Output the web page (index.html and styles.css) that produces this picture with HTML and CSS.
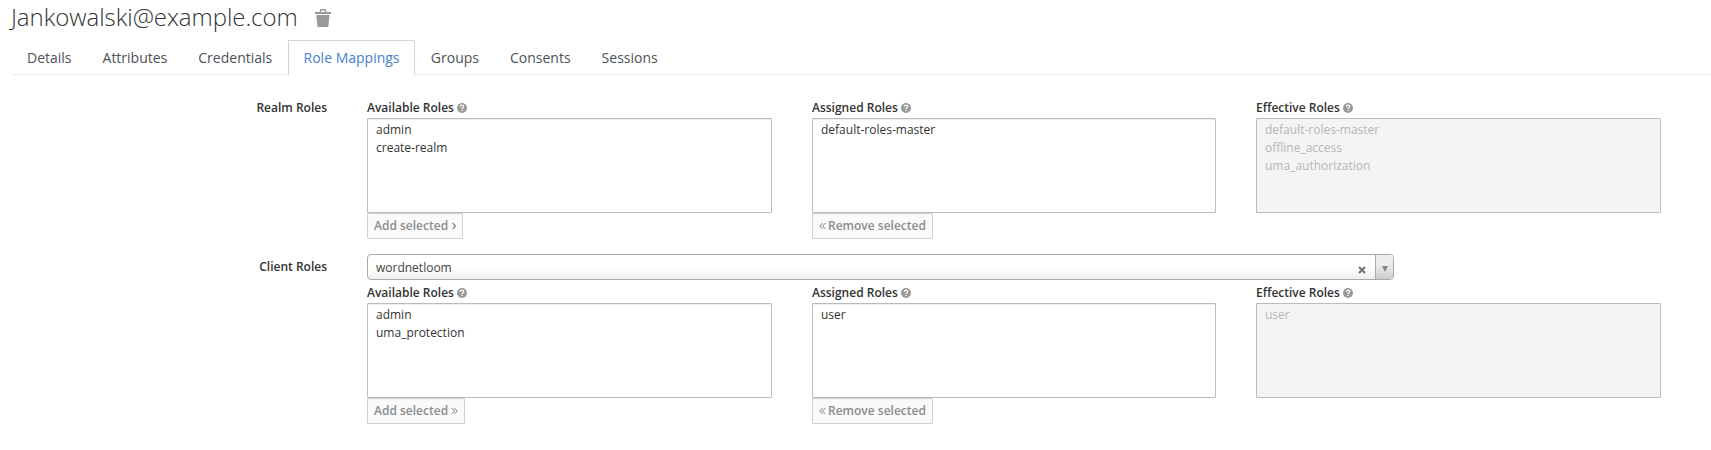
FILE: index.html
```
<!DOCTYPE html>
<html lang="en">
<head>
<meta charset="utf-8">
<title>Role Mappings</title>
<link rel="stylesheet" href="styles.css">
</head>
<body>
<svg class="sprite" aria-hidden="true">
  <symbol id="help" viewBox="0 0 10 10"><circle cx="5" cy="5" r="5" fill="#999"/><path d="M3.3 3.7C3.4 2.7 4.1 2.2 5 2.2c1 0 1.7.6 1.7 1.4C6.7 4.7 5.1 4.7 5.1 6" fill="none" stroke="#fff" stroke-width="1.25"/><path d="M4.4 6.7h1.3v1.2H4.4z" fill="#fff"/></symbol>
  <symbol id="right" viewBox="0 0 4 8"><path d="M.6 1 3.4 4 .6 7" fill="none" stroke="#808284" stroke-width="1.1"/></symbol>
  <symbol id="double-right" viewBox="0 0 7 8"><path d="M.6 1 3.4 4 .6 7M3.4 1 6.2 4 3.4 7" fill="none" stroke="#808284"/></symbol>
  <symbol id="double-left" viewBox="0 0 7 8"><path d="M3.6 1 .8 4l2.8 3M6.4 1 3.6 4l2.8 3" fill="none" stroke="#808284"/></symbol>
</svg>
<header class="heading">
  <h1>Jankowalski@example.com</h1>
  <svg class="trash" viewBox="0 0 16 18"><path d="M0 3h4.8V1.2Q4.8 0 6 0h4q1.2 0 1.2 1.2V3H16v2H0zM6.2 1.4V3h3.6V1.4zM1.2 6h13.4l-1.4 12H2.6z" fill="#999" fill-rule="evenodd"/></svg>
</header>
<nav class="tabs">
  <a>Details</a><a>Attributes</a><a>Credentials</a><a class="active">Role Mappings</a><a>Groups</a><a>Consents</a><a>Sessions</a>
</nav>
<main>
  <section class="row realm">
    <div class="row-label">Realm Roles</div>
    <div class="columns">
      <div class="column">
        <label>Available Roles <svg class="help"><use href="#help"/></svg></label>
        <div class="list"><div>admin</div><div>create-realm</div></div>
        <button class="add">Add selected<svg class="single"><use href="#right"/></svg></button>
      </div>
      <div class="column">
        <label>Assigned Roles <svg class="help"><use href="#help"/></svg></label>
        <div class="list"><div>default-roles-master</div></div>
        <button class="remove"><svg class="double"><use href="#double-left"/></svg>Remove selected</button>
      </div>
      <div class="column">
        <label>Effective Roles <svg class="help"><use href="#help"/></svg></label>
        <div class="list disabled"><div>default-roles-master</div><div>offline_access</div><div>uma_authorization</div></div>
      </div>
    </div>
  </section>
  <section class="row client">
    <div class="row-label">Client Roles</div>
    <div class="content">
      <div class="select">
        <span>wordnetloom</span>
        <svg class="clear" viewBox="0 0 8 8"><path d="m1 1 6 6M7 1 1 7" stroke="#777" stroke-width="2.2"/></svg>
        <div class="arrow"><svg viewBox="0 0 6 6"><path d="M0 0h6L3 6z" fill="#888"/></svg></div>
      </div>
      <div class="columns">
        <div class="column">
          <label>Available Roles <svg class="help"><use href="#help"/></svg></label>
          <div class="list"><div>admin</div><div>uma_protection</div></div>
          <button class="add">Add selected<svg class="double"><use href="#double-right"/></svg></button>
        </div>
        <div class="column">
          <label>Assigned Roles <svg class="help"><use href="#help"/></svg></label>
          <div class="list"><div>user</div></div>
          <button class="remove"><svg class="double"><use href="#double-left"/></svg>Remove selected</button>
        </div>
        <div class="column">
          <label>Effective Roles <svg class="help"><use href="#help"/></svg></label>
          <div class="list disabled"><div>user</div></div>
        </div>
      </div>
    </div>
  </section>
</main>
</body>
</html>
```
FILE: styles.css
```
* { box-sizing: border-box; }
body {
  margin: 0;
  height: 450px;
  overflow: hidden;
  background: #fff;
  color: #333;
  font: 12px/18px "Open Sans", sans-serif;
}
svg { display: block; flex: none; }
.sprite { display: none; }
.heading { display: flex; height: 40px; padding-left: 11px; }
h1 { margin: 0; font-size: 24px; line-height: 34px; font-weight: 300; letter-spacing: -.05px; color: #333; }
.trash { width: 16px; height: 18px; margin: 9px 0 0 17px; }
.tabs {
  display: flex;
  height: 35px;
  margin-left: 12px;
  border-bottom: 1px solid #ececec;
}
.tabs a {
  height: 35px;
  padding: 0 14.5px;
  border: solid transparent;
  border-width: 1px 1px 0;
  font-size: 14px;
  line-height: 34px;
  color: #4d5258;
}
.tabs a:first-child { padding-left: 14px; }
.tabs .active { padding: 0 14.8px; background: #fff; border-color: #d4d4d4; color: #4680ce; }
.row { display: grid; grid-template-columns: 327px 1294px; column-gap: 40px; }
.row-label { text-align: right; font-weight: 600; }
.realm { padding-top: 24px; }
.client { padding-top: 15px; }
.client .row-label { padding-top: 4px; }
.columns { display: grid; grid-template-columns: 405px 404px 405px; column-gap: 40px; }
.column { display: flex; flex-direction: column; align-items: flex-start; }
label { display: flex; align-items: center; gap: 3.5px; height: 19px; line-height: 18px; padding-bottom: 1px; font-weight: 600; }
.help { width: 10px; height: 10px; }
.list {
  width: 100%;
  height: 95px;
  padding: 2px 8px;
  border: 1px solid #bbb;
  border-radius: 1px;
  box-shadow: inset 0 1px 1px rgba(0, 0, 0, .075);
}
.disabled { background: #f4f4f4; color: #b6b6b6; box-shadow: none; }
button {
  display: flex;
  align-items: center;
  height: 26px;
  padding: 0 6px 1px;
  border: 1px solid #d1d1d1;
  border-radius: 1px;
  background: #fafafa;
  color: #8b8d8f;
  font: 600 12px/18px "Open Sans", sans-serif;
}
.single { width: 4px; height: 8px; }
.double { width: 7px; height: 8px; }
.add svg { margin: 1px 0 0 4px; }
.add .double { margin-left: 3px; }
.remove svg { margin: 1px 2px 0 0; }
.select {
  display: flex;
  align-items: center;
  width: 1027px;
  height: 26px;
  margin-bottom: 4px;
  padding-left: 8px;
  overflow: hidden;
  border: 1px solid #aaa;
  border-radius: 4px;
  background: linear-gradient(#fff 50%, #eee);
  color: #444;
}
.select span { padding-top: 2px; }
.clear { width: 8px; height: 8px; margin: 5px 9px 0 auto; }
.arrow {
  display: flex;
  align-items: center;
  justify-content: center;
  width: 18px;
  height: 24px;
  border-left: 1px solid #aaa;
  background: linear-gradient(#eee 40%, #ccc);
}
.arrow svg { width: 6px; height: 6px; margin-top: 4px; }
```
